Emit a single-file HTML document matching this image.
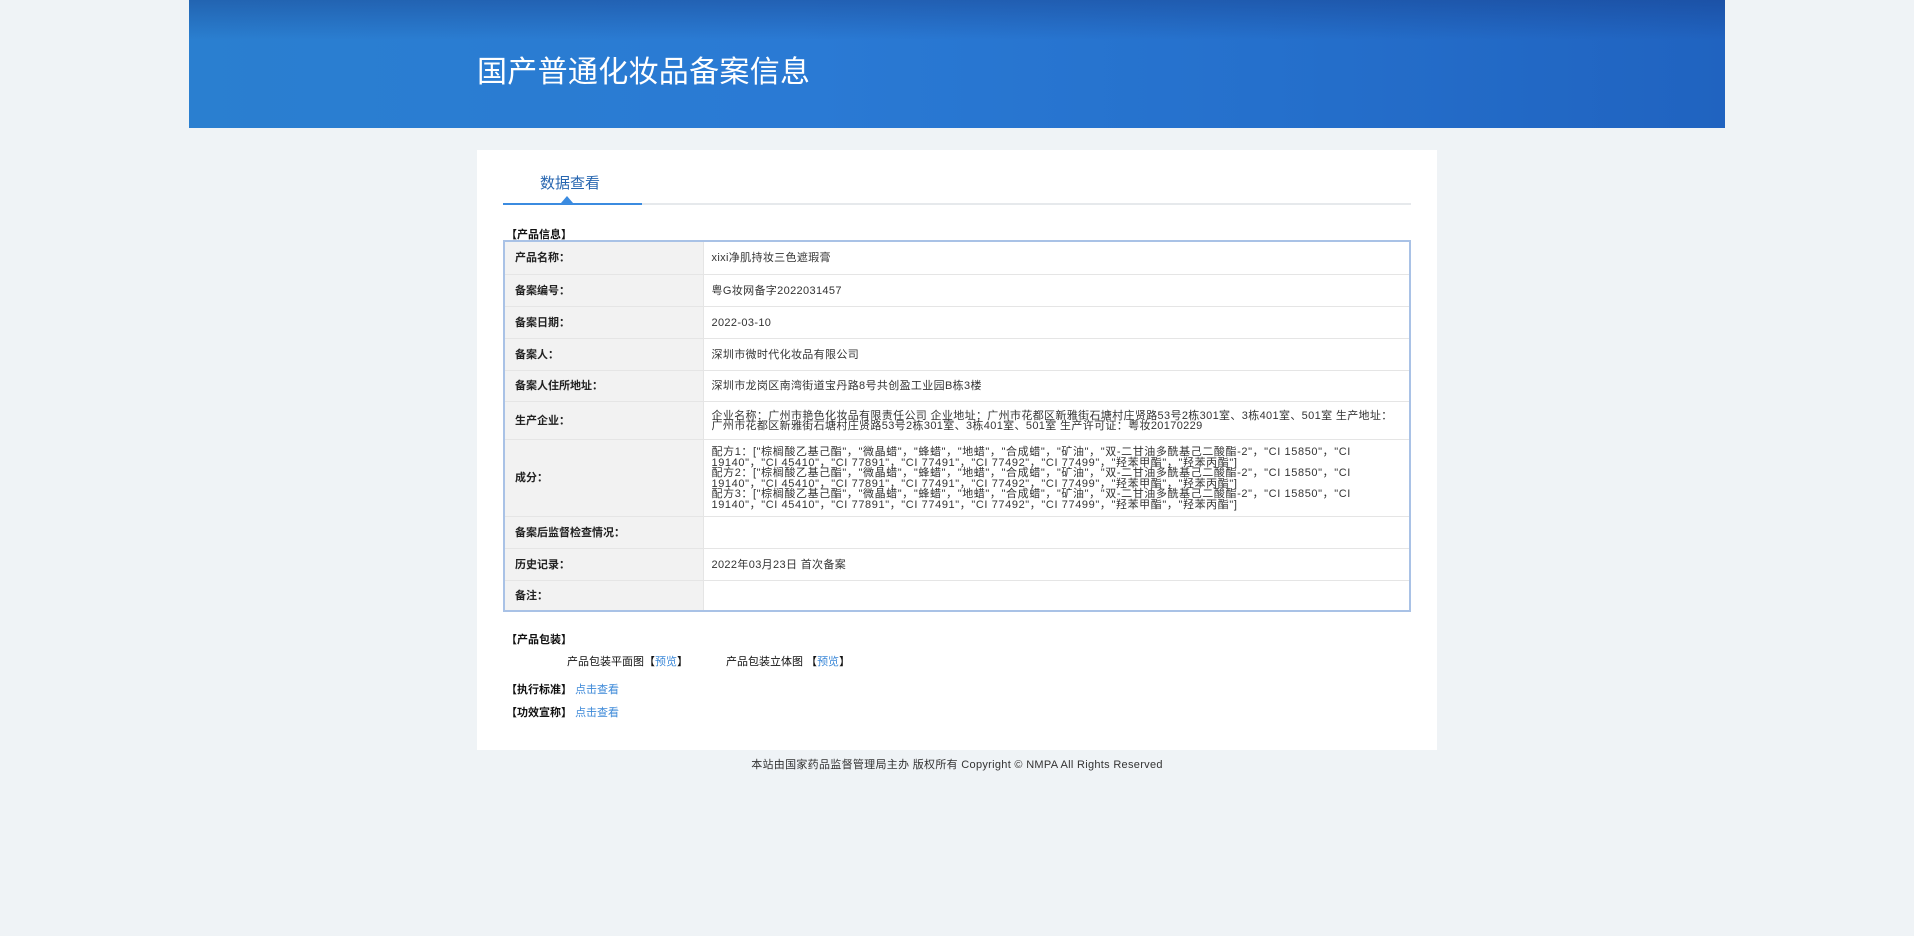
<!DOCTYPE html>
<html><head><meta charset="utf-8"><style>
*{margin:0;padding:0;box-sizing:border-box}
body{width:1914px;height:936px;background:#eff3f6;font-family:"Liberation Sans","Noto Sans CJK SC",sans-serif;font-size:11px;color:#333;position:relative;overflow:hidden}
.hd{position:absolute;left:189px;top:0;width:1536px;height:128px;background:linear-gradient(90deg,#2a7fd0 0%,#2a7ad4 40%,#2570cc 70%,#2063c0 100%);overflow:hidden}
.hd:before{content:"";position:absolute;left:0;top:0;right:0;height:40px;background:linear-gradient(180deg,rgba(20,50,120,.35),rgba(0,0,0,0))}
.hd .t{position:absolute;left:288px;top:47px;color:#fff;font-size:30px;letter-spacing:0.3px}
.card{position:absolute;left:477px;top:150px;width:960px;height:600px;background:#fff}
.tab{position:absolute;left:63px;top:22px;font-size:15px;color:#2766b0}
.gl{position:absolute;left:26px;top:53px;width:908px;height:2px;background:#e6e9ec}
.bl{position:absolute;left:26px;top:53px;width:139px;height:2px;background:#3b8be0}
.tri{position:absolute;left:84px;top:46px;width:0;height:0;border-left:6px solid transparent;border-right:6px solid transparent;border-bottom:7px solid #3b8be0}
.sec{position:absolute;font-weight:bold;color:#111;font-size:11px}
table{position:absolute;left:26px;top:90px;width:908px;border-collapse:collapse;border:2px solid #a9c2e6}
td{border:1px solid #e5e5e5;font-size:11px;line-height:11px;vertical-align:middle}
td.l{width:199px;background:#f2f2f2;font-weight:bold;padding-left:10px;color:#222;padding-top:2px}
td.v{padding:2px 8px 0;color:#333;letter-spacing:0.35px}
a{color:#3b88d8;text-decoration:none}
.ft{position:absolute;top:756px;left:0;width:1914px;text-align:center;font-size:11px;color:#333;letter-spacing:0.3px}
</style></head><body>
<div class="hd"><div class="t">国产普通化妆品备案信息</div></div>
<div class="card">
<div class="tab">数据查看</div>
<div class="gl"></div><div class="bl"></div><div class="tri"></div>
<div class="sec" style="left:29px;top:76px">【产品信息】</div>
<table>
<tr style="height:33px"><td class="l">产品名称：</td><td class="v">xixi净肌持妆三色遮瑕膏</td></tr>
<tr style="height:32px"><td class="l">备案编号：</td><td class="v">粤G妆网备字2022031457</td></tr>
<tr style="height:32px"><td class="l">备案日期：</td><td class="v">2022-03-10</td></tr>
<tr style="height:32px"><td class="l">备案人：</td><td class="v">深圳市微时代化妆品有限公司</td></tr>
<tr style="height:31px"><td class="l">备案人住所地址：</td><td class="v">深圳市龙岗区南湾街道宝丹路8号共创盈工业园B栋3楼</td></tr>
<tr style="height:38px"><td class="l">生产企业：</td><td class="v" style="line-height:10px">企业名称：广州市艳色化妆品有限责任公司 企业地址：广州市花都区新雅街石塘村庄贤路53号2栋301室、3栋401室、501室 生产地址：广州市花都区新雅街石塘村庄贤路53号2栋301室、3栋401室、501室 生产许可证：粤妆20170229</td></tr>
<tr style="height:77px"><td class="l">成分：</td><td class="v" style="line-height:10.5px;letter-spacing:0.6px">配方1：["棕榈酸乙基己酯"，"微晶蜡"，"蜂蜡"，"地蜡"，"合成蜡"，"矿油"，"双-二甘油多酰基己二酸酯-2"，"CI 15850"，"CI 19140"，"CI 45410"，"CI 77891"，"CI 77491"，"CI 77492"，"CI 77499"，"羟苯甲酯"，"羟苯丙酯"]<br>配方2：["棕榈酸乙基己酯"，"微晶蜡"，"蜂蜡"，"地蜡"，"合成蜡"，"矿油"，"双-二甘油多酰基己二酸酯-2"，"CI 15850"，"CI 19140"，"CI 45410"，"CI 77891"，"CI 77491"，"CI 77492"，"CI 77499"，"羟苯甲酯"，"羟苯丙酯"]<br>配方3：["棕榈酸乙基己酯"，"微晶蜡"，"蜂蜡"，"地蜡"，"合成蜡"，"矿油"，"双-二甘油多酰基己二酸酯-2"，"CI 15850"，"CI 19140"，"CI 45410"，"CI 77891"，"CI 77491"，"CI 77492"，"CI 77499"，"羟苯甲酯"，"羟苯丙酯"]</td></tr>
<tr style="height:32px"><td class="l">备案后监督检查情况：</td><td class="v"></td></tr>
<tr style="height:32px"><td class="l">历史记录：</td><td class="v">2022年03月23日 首次备案</td></tr>
<tr style="height:31px"><td class="l">备注：</td><td class="v"></td></tr>
</table>
<div class="sec" style="left:29px;top:481px">【产品包装】</div>
<div style="position:absolute;left:90px;top:503px;color:#111">产品包装平面图【<a>预览</a>】</div>
<div style="position:absolute;left:249px;top:503px;color:#111">产品包装立体图 【<a>预览</a>】</div>
<div class="sec" style="left:29px;top:531px">【执行标准】 <a style="font-weight:normal">点击查看</a></div>
<div class="sec" style="left:29px;top:554px">【功效宣称】 <a style="font-weight:normal">点击查看</a></div>
</div>
<div class="ft">本站由国家药品监督管理局主办 版权所有 Copyright © NMPA All Rights Reserved</div>
</body></html>
